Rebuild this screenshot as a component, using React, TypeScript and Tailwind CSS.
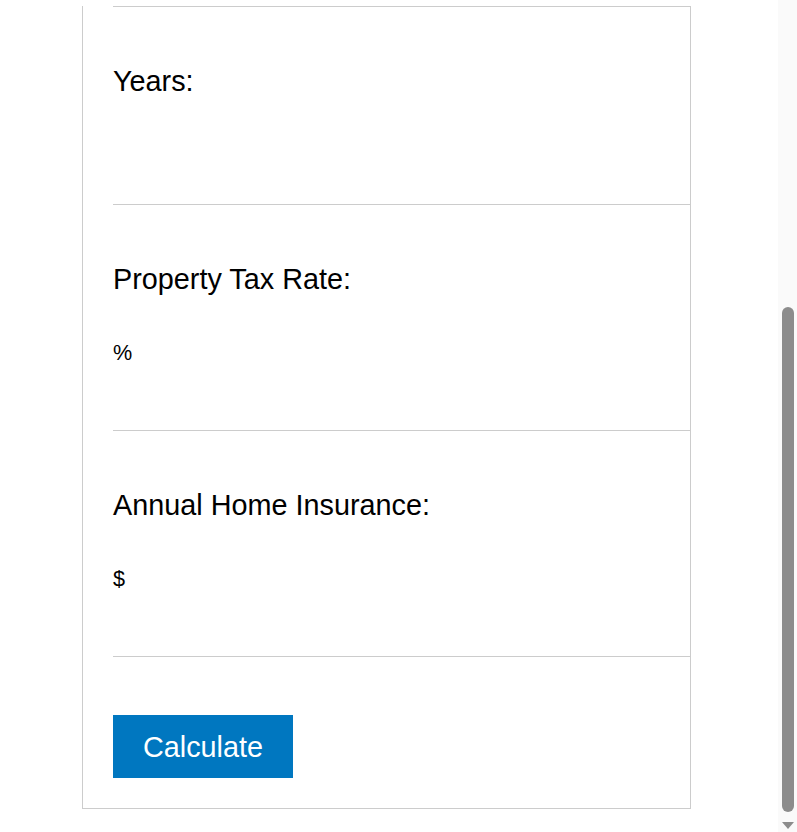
const rows = [
  { label: 'Years:', unit: null as string | null },
  { label: 'Property Tax Rate:', unit: '%' },
  { label: 'Annual Home Insurance:', unit: '$' },
]

function Field({ label, unit }: { label: string; unit: string | null }) {
  return (
    <div className="border-t border-[#cccccc] pt-[58px] pb-[63px]">
      <label className="block text-[28.8px] leading-[32px] text-black">{label}</label>
      {unit ? (
        <div className="mt-[44px] flex h-[28px] items-center text-[21.6px] leading-[28px] text-black">
          <span>{unit}</span>
        </div>
      ) : (
        <div className="mt-[44px]" />
      )}
    </div>
  )
}

function Scrollbar() {
  return (
    <div className="flex h-[832px] w-[19px] shrink-0 flex-col items-center bg-[#fafafa]">
      <div className="h-[307px]" />
      <div className="h-[505px] w-[12px] rounded-full bg-[#8c8c8c]" />
      <svg className="mt-[10px]" width="12" height="7" viewBox="0 0 12 7">
        <path d="M0 0 H12 L6 7 Z" fill="#8c8c8c" />
      </svg>
    </div>
  )
}

export default function App() {
  return (
    <div
      className="flex h-[832px] w-[797px] overflow-hidden bg-white"
      style={{ fontFamily: '"Liberation Sans", Arial, sans-serif' }}
    >
      <main className="flex-1 pt-[6px]">
        <div className="ml-[82px] w-[609px] border-x border-b border-[#cccccc] pl-[30px] pb-[30px]">
          {rows.map((r) => (
            <Field key={r.label} label={r.label} unit={r.unit} />
          ))}
          <div className="border-t border-[#cccccc] pt-[58px]">
            <button className="h-[63px] w-[180px] bg-[#0077c0] text-[28.8px] leading-[32px] text-white">
              Calculate
            </button>
          </div>
        </div>
      </main>
      <Scrollbar />
    </div>
  )
}
